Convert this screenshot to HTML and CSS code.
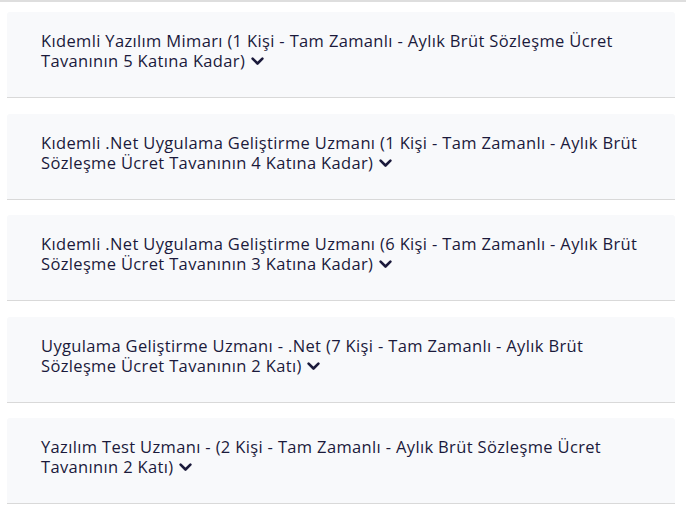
FILE: index.html
```html
<html>

<head>
  <meta charset="utf-8">
  <link rel="stylesheet" href="styles.css">
</head>

<body>
  <div class="job-list">
    <div class="job-rule"></div>

    <!-- Item 1 -->
    <div class="job-item">
      <p class="job-title">Kıdemli Yazılım Mimarı (1 Kişi - Tam Zamanlı - Aylık Brüt Sözleşme Ücret Tavanının 5 Katına Kadar)
        <svg class="job-chevron" viewBox="0 0 13 9"><polyline points="1.6,1.6 6.5,6.5 11.4,1.6" /></svg></p>
    </div>

    <!-- Item 2 -->
    <div class="job-item">
      <p class="job-title">Kıdemli .Net Uygulama Geliştirme Uzmanı (1 Kişi - Tam Zamanlı - Aylık Brüt Sözleşme Ücret Tavanının 4 Katına Kadar)
        <svg class="job-chevron" viewBox="0 0 13 9"><polyline points="1.6,1.6 6.5,6.5 11.4,1.6" /></svg></p>
    </div>

    <!-- Item 3 -->
    <div class="job-item">
      <p class="job-title">Kıdemli .Net Uygulama Geliştirme Uzmanı (6 Kişi - Tam Zamanlı - Aylık Brüt Sözleşme Ücret Tavanının 3 Katına Kadar)
        <svg class="job-chevron" viewBox="0 0 13 9"><polyline points="1.6,1.6 6.5,6.5 11.4,1.6" /></svg></p>
    </div>

    <!-- Item 4 -->
    <div class="job-item">
      <p class="job-title">Uygulama Geliştirme Uzmanı - .Net (7 Kişi - Tam Zamanlı - Aylık Brüt Sözleşme Ücret Tavanının 2 Katı)
        <svg class="job-chevron" viewBox="0 0 13 9"><polyline points="1.6,1.6 6.5,6.5 11.4,1.6" /></svg></p>
    </div>

    <!-- Item 5 -->
    <div class="job-item">
      <p class="job-title">Yazılım Test Uzmanı - (2 Kişi - Tam Zamanlı - Aylık Brüt Sözleşme Ücret Tavanının 2 Katı)
        <svg class="job-chevron" viewBox="0 0 13 9"><polyline points="1.6,1.6 6.5,6.5 11.4,1.6" /></svg></p>
    </div>
  </div>
</body>

</html>
```

FILE: styles.css
```css
body {
  margin: 0;
  background-color: #ffffff;
  font-family: "Open Sans", "Liberation Sans", sans-serif;
  color: #1b1a3b;
}

.job-list {
  padding: 0 11px 0 7px;
}

.job-rule {
  height: 2px;
  margin: 0 -11px 10px -7px;
  background-color: #dedede;
}

.job-item {
  background-color: #f8f9fb;
  border-bottom: 1px solid #d9d9d9;
  border-radius: 3px 3px 0 0;
  margin-bottom: 15.5px;
  padding: 19px 34px 26px 34px;
}

.job-title {
  margin: 0;
  font-size: 16.5px;
  font-weight: 500;
  letter-spacing: 0.35px;
  line-height: 20px;
}

.job-chevron {
  width: 13px;
  height: 9px;
  margin-left: 1px;
  vertical-align: 1px;
  fill: none;
  stroke: #1b1a3b;
  stroke-width: 2.6;
  stroke-linecap: round;
  stroke-linejoin: round;
}
```
